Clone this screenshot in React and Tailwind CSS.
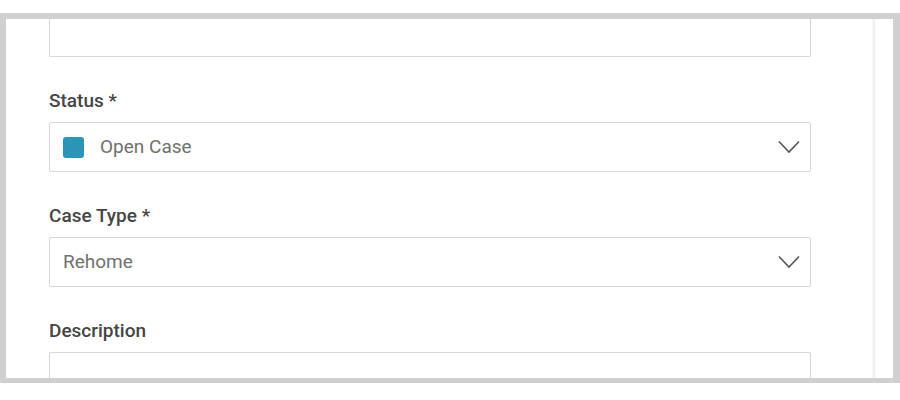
const Chevron = () => (
  <svg width="22" height="14" viewBox="0 0 22 14" fill="none">
    <polyline points="1,1.5 11,12 21,1.5" stroke="#555" strokeWidth="1.6" />
  </svg>
)

function Field({ label, children }) {
  return (
    <div className="mt-[32px]">
      <div className="text-[19px] leading-[24px] font-medium text-[#454545] mb-[9px]">{label}</div>
      {children}
    </div>
  )
}

function Select({ children }) {
  return (
    <div className="h-[50px] border border-[#d6d6d6] rounded-[2px] flex items-center justify-between pl-[13px] pr-[10px]">
      <div className="flex items-center">{children}</div>
      <Chevron />
    </div>
  )
}

export default function App() {
  return (
    <div className="w-[900px] h-[400px] bg-white pt-[13px] overflow-hidden" style={{ fontFamily: 'Roboto, "Liberation Sans", sans-serif' }}>
      <div className="h-[370px] border-[#d0d0d0] border-l-[6px] border-r-[7px] border-t-[6px] border-b-[5px] flex overflow-hidden">
        <div className="w-[866px] pl-[43px] overflow-hidden">
          <div className="w-[762px]">
            {/* previous field, scrolled out of view */}
            <div className="h-[38px] border border-t-0 border-[#d6d6d6] rounded-b-[2px]" />

            <div className="mt-[32px]">
              <div className="text-[19px] leading-[24px] font-medium text-[#454545] mb-[9px]">Status *</div>
              <Select>
                <span className="w-[21px] h-[21px] rounded-[3px] bg-[#2a95b6] mr-[16px]" />
                <span className="text-[19px] text-[#707070] font-normal">Open Case</span>
              </Select>
            </div>

            <Field label="Case Type *">
              <Select>
                <span className="text-[19px] text-[#707070] font-normal">Rehome</span>
              </Select>
            </Field>

            <Field label="Description">
              <div className="h-[60px] border border-[#d6d6d6] rounded-[2px]" />
            </Field>
          </div>
        </div>
        <div className="w-[3px] h-full bg-gradient-to-r from-[#fafafa] to-[#ebebeb]" />
        <div className="flex-1" />
      </div>
    </div>
  )
}
